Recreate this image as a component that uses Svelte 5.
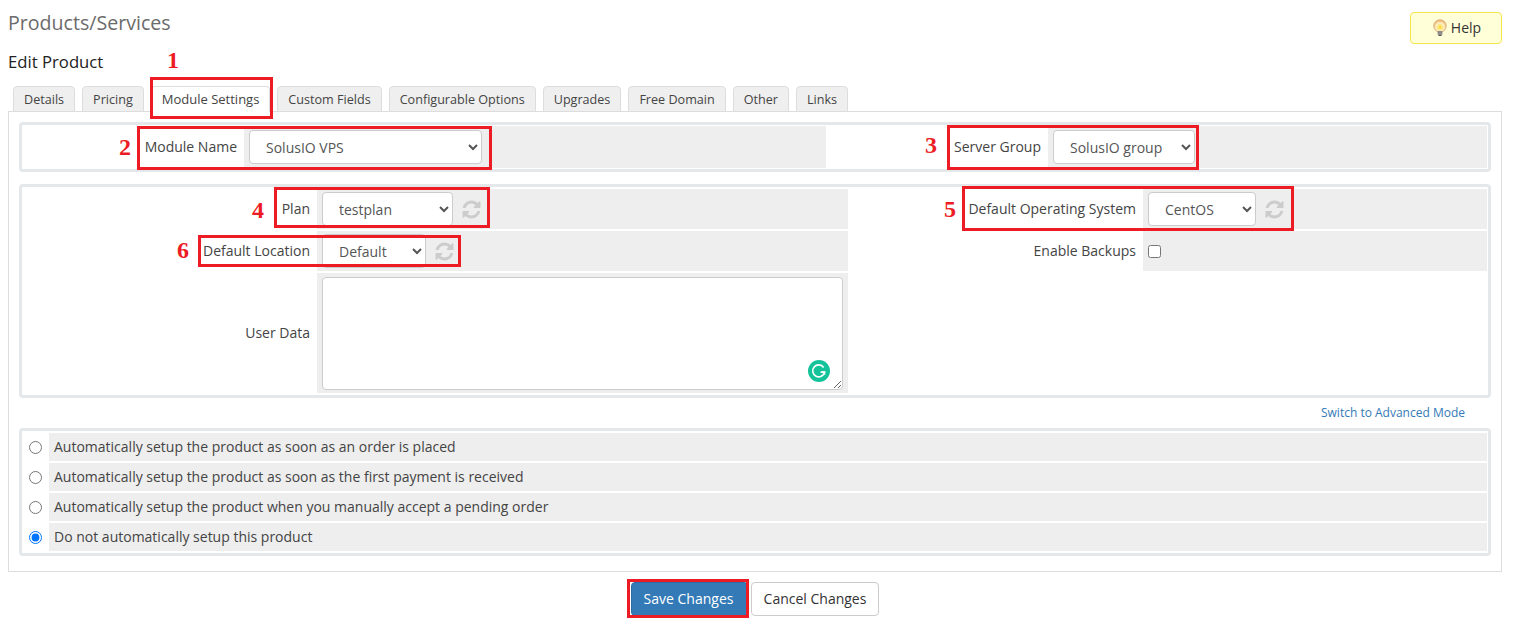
<script lang="ts">
  const tabs = ['Details', 'Pricing', 'Module Settings', 'Custom Fields', 'Configurable Options', 'Upgrades', 'Free Domain', 'Other', 'Links'];
  const autoOptions = [
    { text: 'Automatically setup the product as soon as an order is placed', on: false },
    { text: 'Automatically setup the product as soon as the first payment is received', on: false },
    { text: 'Automatically setup the product when you manually accept a pending order', on: false },
    { text: 'Do not automatically setup this product', on: true }
  ];
  // Red annotation boxes drawn over the form, as in the docs screenshot.
  const marks = [
    { x: 150, y: 77, w: 123, h: 42 },
    { x: 137, y: 126, w: 355, h: 44 },
    { x: 947, y: 125, w: 252, h: 45 },
    { x: 274, y: 187, w: 216, h: 41 },
    { x: 962, y: 186, w: 332, h: 45 },
    { x: 198, y: 235, w: 263, h: 32 },
    { x: 627, y: 579, w: 122, h: 39 }
  ];
  const numbers = [
    { n: 1, x: 167, y: 46 },
    { n: 2, x: 119, y: 133 },
    { n: 3, x: 925, y: 131 },
    { n: 4, x: 252, y: 196 },
    { n: 5, x: 944, y: 195 },
    { n: 6, x: 177, y: 236 }
  ];
  const refresh = 'M1639 1056q0 5-1 7-64 268-268 434.5t-478 166.5q-146 0-282.5-55t-243.5-157l-129 129q-19 19-45 19t-45-19-19-45v-448q0-26 19-45t45-19h448q26 0 45 19t19 45-19 45l-137 137q71 66 161 102t187 36q134 0 250-65t186-179q11-17 53-117 8-23 30-23h192q13 0 22.5 9.5t9.5 22.5zm25-800v448q0 26-19 45t-45 19h-448q-26 0-45-19t-19-45 19-45l138-138q-148-137-349-137-134 0-250 65t-186 179q-11 17-53 117-8 23-30 23h-199q-13 0-22.5-9.5t-9.5-22.5v-7q65-268 270-434.5t480-166.5q146 0 284 55.5t245 156.5l130-129q19-19 45-19t45 19 19 45z';
</script>

{#snippet reload()}
  <svg class="reload" viewBox="0 0 1792 1792" aria-hidden="true"><path d={refresh} /></svg>
{/snippet}

<div class="page">
  <header class="top">
    <h1>Products/Services</h1>
    <button class="help">
      <svg width="16" height="18" viewBox="0 0 16 18" aria-hidden="true">
        <defs>
          <radialGradient id="bulb" cx="0.5" cy="0.6" r="0.6">
            <stop offset="0" stop-color="#ffd92e" />
            <stop offset="0.55" stop-color="#fdf0c4" />
            <stop offset="1" stop-color="#e8a866" />
          </radialGradient>
        </defs>
        <circle cx="8" cy="7" r="6.2" fill="url(#bulb)" stroke="#dfa873" stroke-width="0.9" />
        <rect x="5.6" y="12" width="4.8" height="3.6" fill="#8b8b8b" />
        <rect x="6.4" y="15.6" width="3.2" height="1.4" fill="#555" />
      </svg>
      Help
    </button>
  </header>

  <h2>Edit Product</h2>

  <nav class="tabs">
    {#each tabs as tab}
      <span class="tab" class:active={tab === 'Module Settings'}>{tab}</span>
    {/each}
  </nav>

  <section class="panel">
    <div class="box cols-a">
      <div class="lbl">Module Name</div>
      <div class="fld"><select class="w-module"><option>SolusIO VPS</option></select></div>
      <div class="lbl">Server Group</div>
      <div class="fld"><select class="w-group"><option>SolusIO group</option></select></div>
    </div>

    <div class="box cols-b">
      <div class="lbl">Plan</div>
      <div class="fld"><select class="w-plan"><option>testplan</option></select>{@render reload()}</div>
      <div class="lbl">Default Operating System</div>
      <div class="fld"><select class="w-os"><option>CentOS</option></select>{@render reload()}</div>

      <div class="lbl">Default Location</div>
      <div class="fld"><select class="w-loc"><option>Default</option></select>{@render reload()}</div>
      <div class="lbl">Enable Backups</div>
      <div class="fld"><input type="checkbox" /></div>

      <div class="lbl">User Data</div>
      <div class="fld area">
        <textarea></textarea>
        <span class="grammarly">
          <svg viewBox="0 0 22 22" width="22" height="22" aria-hidden="true">
            <circle cx="11" cy="11" r="11" fill="#15c39a" />
            <path d="M15.6 7.4A6 6 0 1 0 16.6 12.2H12.6" fill="none" stroke="#fff" stroke-width="1.7" />
            <path d="M17.2 11.6v3.6l-3.2-3.6z" fill="#fff" />
          </svg>
        </span>
      </div>
    </div>

    <div class="switch"><a href="#advanced">Switch to Advanced Mode</a></div>

    <div class="box auto">
      {#each autoOptions as opt}
        <div class="radio"><input type="radio" name="autosetup" checked={opt.on} /></div>
        <div class="fld text">{opt.text}</div>
      {/each}
    </div>
  </section>

  <div class="actions">
    <button class="btn primary">Save Changes</button>
    <button class="btn">Cancel Changes</button>
  </div>

  {#each marks as m}
    <div class="mark" style="left:{m.x}px;top:{m.y}px;width:{m.w}px;height:{m.h}px"></div>
  {/each}
  {#each numbers as c}
    <div class="num" style="left:{c.x}px;top:{c.y}px">{c.n}</div>
  {/each}
</div>

<style>
  :global(body) {
    margin: 0;
    background: #fff;
    font-family: "Open Sans", sans-serif;
    font-size: 13px;
    color: #333;
    overflow: hidden;
  }
  .page {
    position: relative;
    box-sizing: border-box;
    width: 1517px;
    height: 624px;
    padding: 0 15px 0 8px;
    overflow: hidden;
  }

  .top {
    display: flex;
    justify-content: space-between;
    align-items: flex-start;
    height: 47px;
    padding-top: 12px;
    box-sizing: border-box;
  }
  h1 {
    margin: -1px 0 0;
    font-size: 19.6px;
    font-weight: 400;
    line-height: 24px;
    color: #6b6b6b;
  }
  .help {
    display: flex;
    align-items: center;
    justify-content: center;
    gap: 3px;
    box-sizing: border-box;
    width: 92px;
    height: 32px;
    background: #ffffd8;
    border: 1px solid #f5e74e;
    border-radius: 4px;
    font: 14px/18px "Open Sans", sans-serif;
    color: #333;
    padding: 0 2px 1px 3px;
  }
  h2 {
    margin: 0;
    font-size: 16.7px;
    font-weight: 400;
    line-height: 30px;
    color: #222;
  }

  .tabs {
    display: flex;
    gap: 7px;
    margin-top: 9px;
    padding-left: 5px;
    height: 25px;
  }
  .tab {
    box-sizing: border-box;
    height: 26px;
    padding: 0 10px;
    line-height: 25px;
    font-size: 12.6px;
    color: #444;
    background: #efefef;
    border: 1px solid #ddd;
    border-radius: 4px 4px 0 0;
    position: relative;
    z-index: 1;
  }
  .tab.active {
    font-size: 13px;
    background: #fff;
    border-bottom-color: #fff;
  }

  .panel {
    box-sizing: border-box;
    height: 461px;
    border: 1px solid #ddd;
    padding: 10px;
    margin-top: 0;
  }
  .box {
    border: 3px solid #e4e8ea;
    border-radius: 4px;
    padding: 1px 1px 1px 0;
    display: grid;
    row-gap: 2px;
  }
  .cols-a {
    grid-template-columns: 222px 582px 222px 1fr;
    height: 42px;
    grid-auto-rows: 42px;
    margin-bottom: 12px;
  }
  .cols-b {
    grid-template-columns: 295px 531px 295px 1fr;
    grid-template-rows: 40px 40px 120px;
    height: 204px;
    padding-top: 2px;
    padding-bottom: 2px;
  }
  .auto {
    grid-template-columns: 27px 1fr;
    grid-auto-rows: 28px;
    padding-top: 2px;
    padding-bottom: 2px;
  }
  .lbl {
    display: flex;
    align-items: center;
    justify-content: flex-end;
    padding: 0 7px 2px 0;
    font-size: 14px;
    color: #444;
  }
  .fld {
    display: flex;
    align-items: center;
    gap: 8px;
    background: #eee;
    padding-left: 5px;
  }
  .fld.area {
    position: relative;
    align-items: flex-start;
    padding-top: 4px;
  }
  .fld.text {
    font-size: 14px;
    color: #444;
    padding-bottom: 2px;
    box-sizing: border-box;
  }
  .radio {
    display: flex;
    align-items: center;
  }
  .radio input {
    margin: 0 0 0 7px;
    width: 13px;
    height: 13px;
  }

  select {
    box-sizing: border-box;
    height: 34px;
    padding: 6px 12px;
    background: #fff;
    border: 1px solid #ccc;
    border-radius: 4px;
    font: 14px "Open Sans", sans-serif;
    color: #555;
  }
  .w-module { width: 233px; }
  .w-group { width: 142px; }
  .w-plan { width: 131px; }
  .w-os { width: 108px; }
  .w-loc { width: 104px; }

  .reload {
    width: 21px;
    height: 21px;
    fill: #ccc;
  }
  input[type="checkbox"] {
    margin: 0;
    width: 13px;
    height: 13px;
  }
  textarea {
    box-sizing: border-box;
    width: 521px;
    height: 113px;
    border: 1px solid #ccc;
    border-radius: 4px;
    background: #fff;
  }
  .grammarly {
    position: absolute;
    left: 491px;
    top: 87px;
    width: 22px;
    height: 22px;
  }

  .switch {
    height: 30px;
    box-sizing: border-box;
    padding: 7px 26px 0 0;
    text-align: right;
    font-size: 12px;
    line-height: 16px;
  }
  .switch a {
    color: #337ab7;
    text-decoration: none;
  }

  .actions {
    display: flex;
    justify-content: center;
    gap: 3px;
    margin-top: 10px;
  }
  .btn {
    box-sizing: border-box;
    height: 34px;
    width: 128px;
    padding: 0 0 2px;
    background: #fff;
    border: 1px solid #ccc;
    border-radius: 4px;
    font: 14px "Open Sans", sans-serif;
    color: #333;
  }
  .btn.primary {
    width: 117px;
    padding-right: 2px;
    background: #337ab7;
    border-color: #2e6da4;
    color: #fff;
  }

  .mark {
    position: absolute;
    box-sizing: border-box;
    border: 3px solid #ed1c24;
    z-index: 2;
  }
  .num {
    position: absolute;
    z-index: 2;
    font: bold 24px/28px "Liberation Serif", serif;
    color: #ed1c24;
  }
</style>
